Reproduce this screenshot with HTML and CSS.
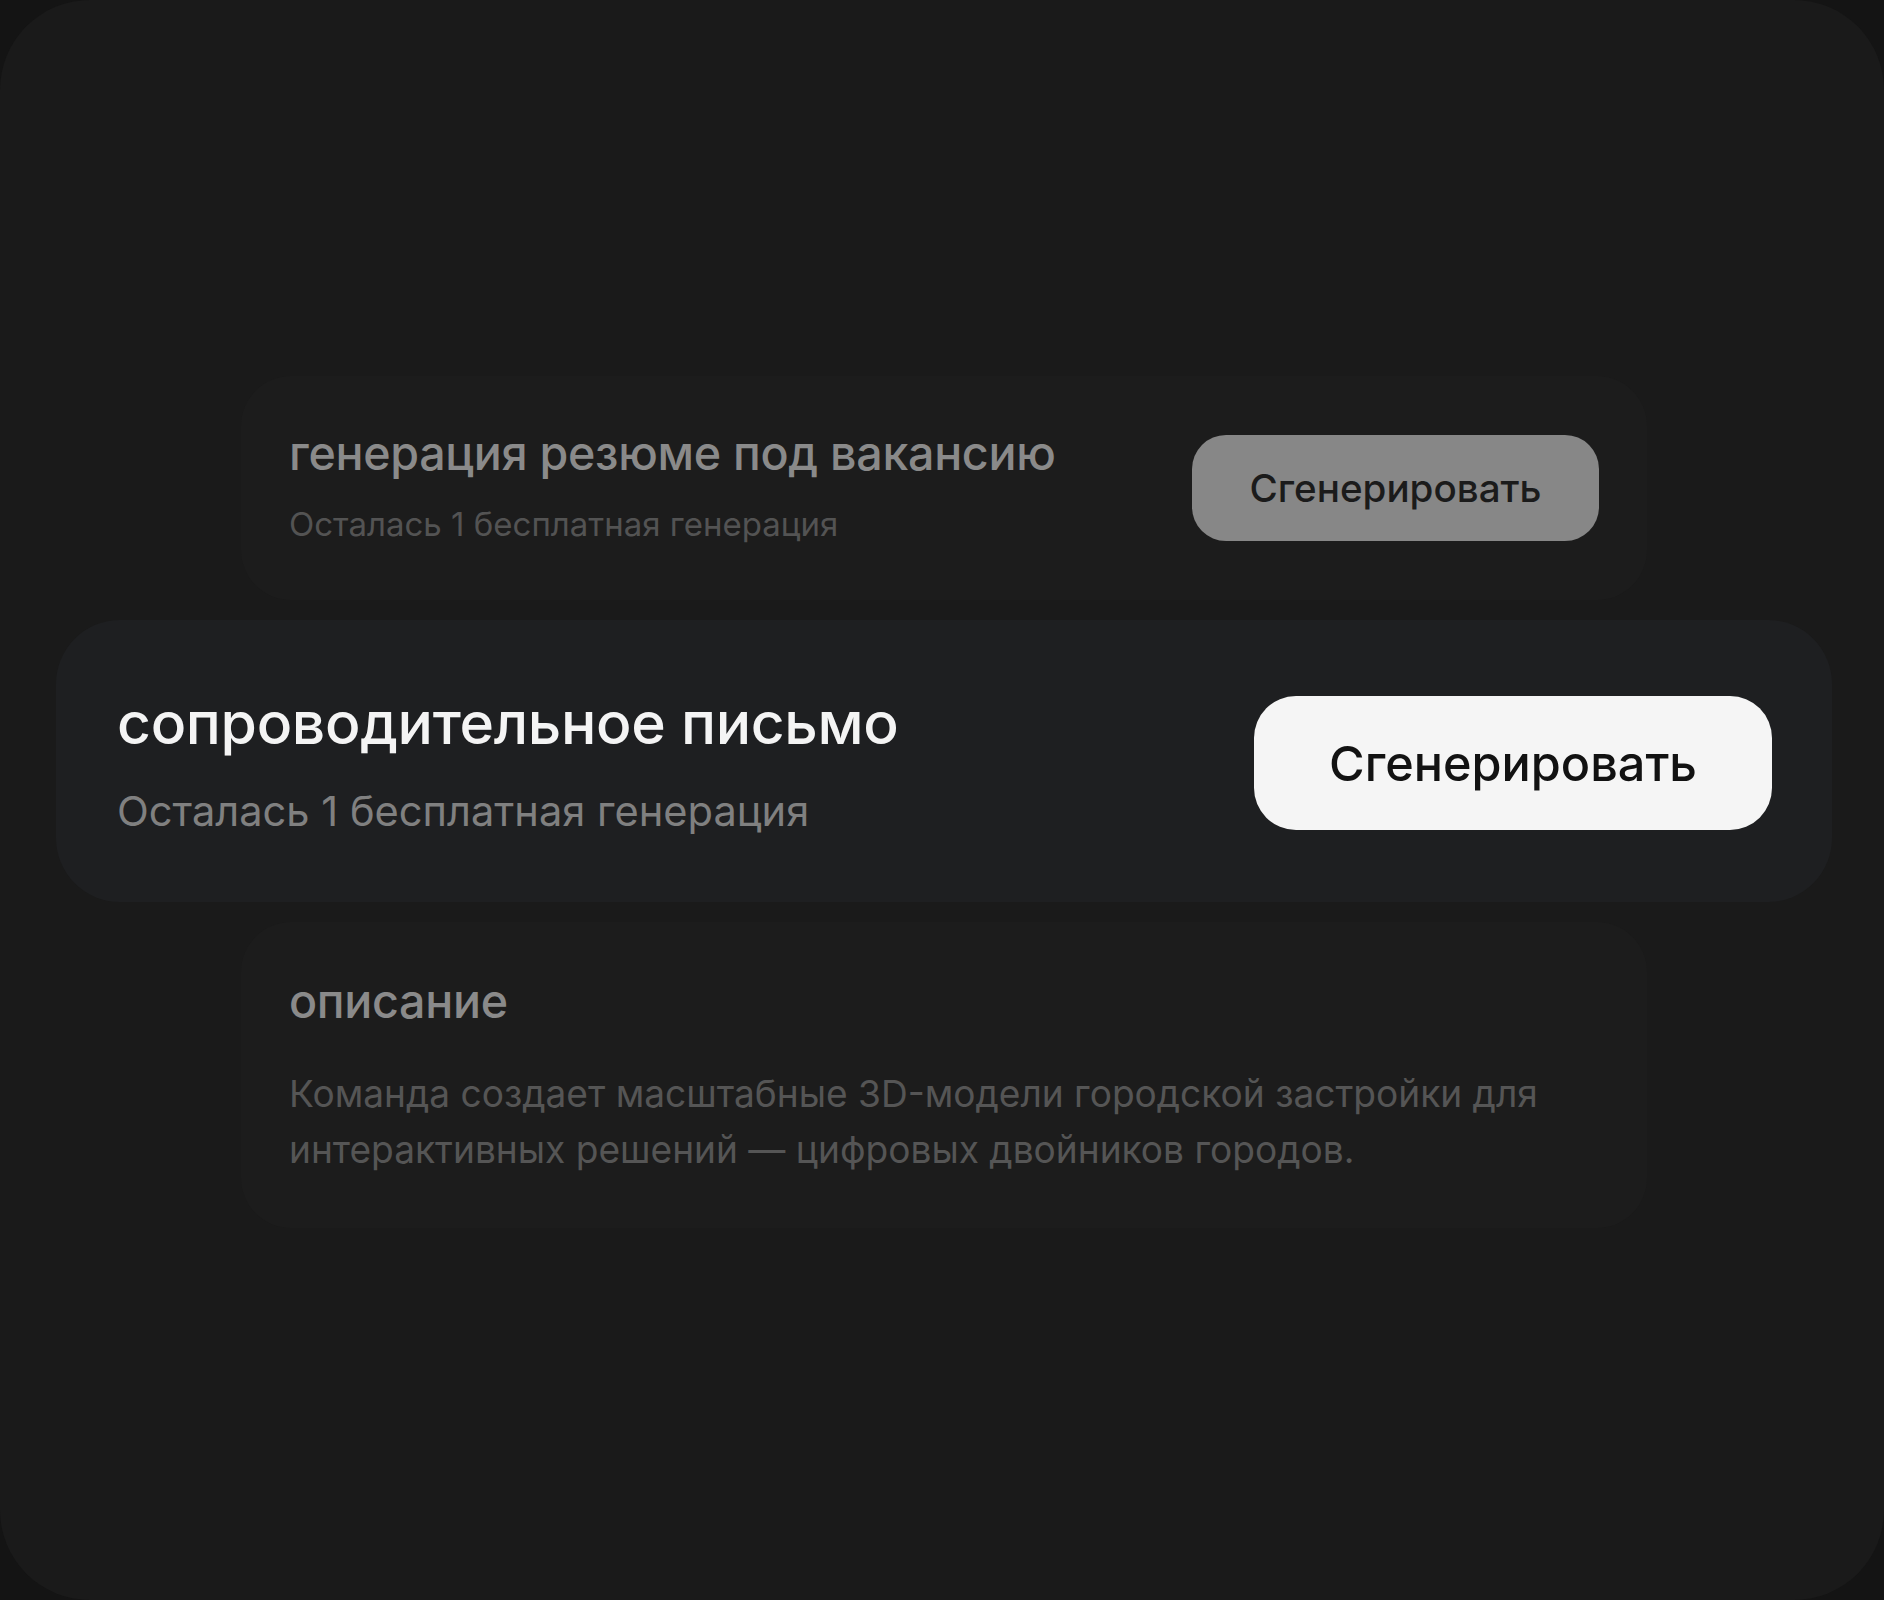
FILE: index.html
```html
<!DOCTYPE html>
<html lang="ru">
<head>
<meta charset="utf-8">
<title>Генерация</title>
<link rel="stylesheet" href="styles.css">
</head>
<body>
<main class="frame">
  <div class="stack">
    <section class="card card--side">
      <div class="card__text">
        <h2 class="card__title">генерация резюме под вакансию</h2>
        <p class="card__sub">Осталась 1 бесплатная генерация</p>
      </div>
      <button class="btn btn--muted">Сгенерировать</button>
    </section>
    <section class="card card--active">
      <div class="card__text">
        <h2 class="card__title">сопроводительное письмо</h2>
        <p class="card__sub">Осталась 1 бесплатная генерация</p>
      </div>
      <button class="btn btn--primary">Сгенерировать</button>
    </section>
    <section class="card card--side card--desc">
      <div class="card__text">
        <h2 class="card__title">описание</h2>
        <p class="card__body">Команда создает масштабные 3D-модели городской застройки для интерактивных решений — цифровых двойников городов.</p>
      </div>
    </section>
  </div>
</main>
</body>
</html>
```
FILE: styles.css
```css
* { box-sizing: border-box; }
html, body { margin: 0; padding: 0; }
body {
  background: #141414;
  font-family: Inter, "Noto Sans", sans-serif;
  width: 1884px;
  height: 1600px;
}
.frame {
  width: 1884px;
  height: 1600px;
  background: #1a1a1a;
  border-radius: 90px;
  display: flex;
  align-items: center;
  justify-content: center;
}
.stack {
  display: flex;
  flex-direction: column;
  align-items: center;
  gap: 20px;
  margin-left: 4px;
  margin-top: 4px;
}
.card {
  display: flex;
  align-items: center;
  justify-content: space-between;
}
.card__title, .card__sub, .card__body { margin: 0; }
.card__title { font-weight: 500; letter-spacing: -0.3px; }
.card__sub, .card__body { font-weight: 400; }

.card--side {
  width: 1406px;
  background: #1c1c1c;
  border-radius: 50px;
  padding: 48px 48px 56px;
}
.card--side .card__title {
  font-size: 46.6px;
  line-height: 58px;
  color: #8a8a8a;
}
.card--side .card__sub {
  margin-top: 22px;
  font-size: 33px;
  line-height: 40px;
  color: #535353;
}
.card--desc { padding: 50px 48px 50px; align-items: flex-start; }
.card__body {
  margin-top: 36px;
  font-size: 37.1px;
  line-height: 56px;
  color: #555555;
}

.card--active {
  width: 1776px;
  background: #1e1f21;
  border-radius: 64px;
  padding: 67px 60px 65px 61px;
}
.card--active .card__title {
  font-size: 58.8px;
  line-height: 72px;
  color: #f4f4f4;
}
.card--active .card__sub {
  margin-top: 26px;
  font-size: 41.6px;
  line-height: 52px;
  color: #808080;
}

.btn {
  border: 0;
  font-family: Inter, "Noto Sans", sans-serif;
  font-weight: 500;
  display: flex;
  align-items: center;
  justify-content: center;
  flex-shrink: 0;
}
.btn--muted {
  width: 407px;
  height: 106px;
  border-radius: 34px;
  background: #878787;
  color: #1b1b1b;
  font-size: 38.6px;
  margin-top: 8px;
}
.btn--primary {
  width: 518px;
  height: 134px;
  border-radius: 42px;
  background: #f5f5f5;
  color: #121212;
  font-size: 48.6px;
  margin-top: 2px;
}
```
